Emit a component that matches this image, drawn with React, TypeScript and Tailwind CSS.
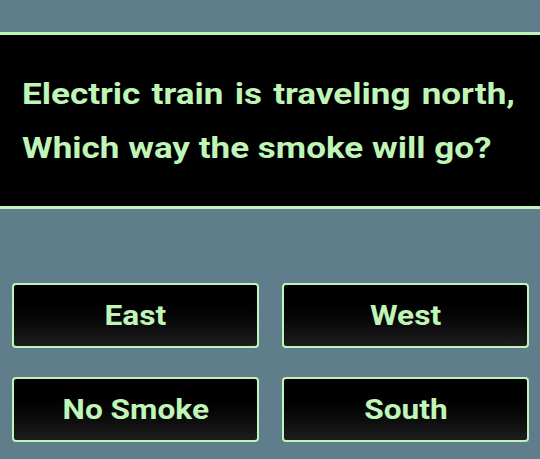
import React from 'react';

const answers = ['East', 'West', 'No Smoke', 'South'];

const App: React.FC = () => {
  return (
    <div
      className="w-[540px] h-[459px] bg-[#607d8b] pt-[32px] overflow-hidden"
      style={{ fontFamily: 'Roboto, "Noto Sans", sans-serif' }}
    >
      <div className="bg-black border-y-[3.5px] border-[#bff5b6] h-[177px] flex items-center pl-[22px]">
        {/* the glyphs in the shot are stretched wide, so scale the block on x */}
        <p className="w-[422px] text-justify origin-left scale-x-[1.168] text-[30px] leading-[54px] font-bold text-[#bff5b6]">
          Electric train is traveling north, Which way the smoke will go?
        </p>
      </div>

      <div className="grid grid-cols-2 gap-x-[23px] gap-y-[29px] pl-3 pr-[11px] mt-[74px]">
        {answers.map((a) => (
          <button
            key={a}
            className="h-[65px] rounded-[4px] border-[2.5px] border-[#bff5b6] bg-gradient-to-b from-black to-[#1e1e1e] text-[28px] font-bold text-[#bff5b6]"
          >
            <span className="inline-block scale-x-[1.13]">{a}</span>
          </button>
        ))}
      </div>
    </div>
  );
};

export default App;
